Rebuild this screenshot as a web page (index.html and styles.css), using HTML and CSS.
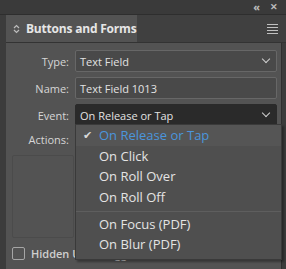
FILE: index.html
```html
<!DOCTYPE html>
<html lang="en">
<head>
    <meta charset="UTF-8">
    <title>Buttons and Forms</title>
    <link rel="stylesheet" href="styles.css">
</head>
<body>
    <div class="topbar">
        <span class="top-icon">&#x00AB;</span>
        <span class="top-icon close">&#x2715;</span>
    </div>
    <div class="tabrow">
        <div class="tab">
            <svg class="updown" width="7" height="10" viewBox="0 0 7 10">
                <path d="M1 4 L3.5 1.5 L6 4 M1 6 L3.5 8.5 L6 6" fill="none" stroke="#bdbdbd" stroke-width="1.2"/>
            </svg>
            Buttons and Forms
        </div>
        <div class="menu-btn">
            <span></span><span></span><span></span><span></span>
        </div>
    </div>

    <div class="panel">
        <div class="row">
            <label>Type:</label>
            <div class="field select">Text Field<span class="chev"></span></div>
        </div>
        <div class="row">
            <label>Name:</label>
            <div class="field">Text Field 1013</div>
        </div>
        <div class="row">
            <label>Event:</label>
            <div class="field select open">On Release or Tap<span class="chev"></span></div>
        </div>
        <div class="row actions">
            <label>Actions:</label>
        </div>
        <div class="action-list"></div>
        <div class="check-row">
            <span class="checkbox"></span>
            <span>Hidden Until Triggered</span>
        </div>

        <ul class="dropdown">
            <li class="selected"><span class="tick">&#x2714;</span>On Release or Tap</li>
            <li>On Click</li>
            <li>On Roll Over</li>
            <li>On Roll Off</li>
            <li class="sep"></li>
            <li>On Focus (PDF)</li>
            <li>On Blur (PDF)</li>
        </ul>
    </div>
</body>
</html>
```

FILE: styles.css
```css
body {
    margin: 0;
    width: 286px;
    height: 269px;
    overflow: hidden;
    background: #3c3c3c;
    font-family: "Open Sans", sans-serif;
    color: #dcdcdc;
}
.topbar {
    height: 14px;
    display: flex;
    justify-content: flex-end;
    align-items: center;
    gap: 10px;
    padding-right: 8px;
    background: #3a3a3a;
    border-bottom: 1px solid #2e2e2e;
}
.top-icon {
    font-size: 11px;
    line-height: 14px;
    color: #bcbcbc;
    font-weight: bold;
}
.top-icon.close {
    font-size: 9px;
}
.tabrow {
    display: flex;
    height: 27px;
    margin-left: 6px;
    background: #404040;
    border-bottom: 1px solid #333;
}
.tab {
    width: 131px;
    display: flex;
    align-items: center;
    gap: 6px;
    padding-left: 7px;
    box-sizing: border-box;
    background: #535353;
    font-weight: bold;
    font-size: 12px;
    letter-spacing: -0.2px;
    white-space: nowrap;
    color: #e6e6e6;
}
.menu-btn {
    margin-left: auto;
    margin-right: 8px;
    display: flex;
    flex-direction: column;
    justify-content: center;
    gap: 2px;
}
.menu-btn span {
    display: block;
    width: 11px;
    height: 1px;
    background: #c0c0c0;
}
.panel {
    position: relative;
    height: 227px;
    margin-left: 6px;
    margin-right: 4px;
    padding-top: 7px;
    box-sizing: border-box;
    background: #535353;
    border-right: 1px solid #2f2f2f;
}
.row {
    display: flex;
    align-items: center;
    margin-bottom: 5px;
}
.row label {
    width: 63px;
    text-align: right;
    padding-right: 6px;
    font-size: 11px;
    color: #d6d6d6;
}
.field {
    position: relative;
    width: 202px;
    height: 22px;
    box-sizing: border-box;
    padding-left: 4px;
    display: flex;
    align-items: center;
    font-size: 11px;
    color: #e2e2e2;
    background: #494949;
    border: 1px solid #676767;
    border-radius: 2px;
}
.field.open {
    background: #2a2a2a;
    border-color: #2a2a2a;
}
.chev {
    position: absolute;
    right: 7px;
    top: 5px;
    width: 5px;
    height: 5px;
    border-right: 1.5px solid #cfcfcf;
    border-bottom: 1.5px solid #cfcfcf;
    transform: rotate(45deg);
}
.row.actions {
    margin-top: 4px;
    height: 16px;
}
.action-list {
    margin: 8px 0 0 6px;
    width: 60px;
    height: 81px;
    border: 1px solid #4b4b4b;
    border-radius: 2px;
}
.check-row {
    display: flex;
    align-items: center;
    gap: 6px;
    margin: 8px 0 0 6px;
    font-size: 11px;
    font-weight: 600;
    color: #cfcfcf;
}
.checkbox {
    width: 11px;
    height: 11px;
    border: 1px solid #a6a6a6;
    border-radius: 2px;
}
.dropdown {
    position: absolute;
    left: 69px;
    top: 81px;
    width: 205px;
    margin: 0;
    padding: 0 0 4px;
    list-style: none;
    background: #4f4f4f;
    border: 1px solid #3a3a3a;
    box-shadow: 2px 2px 2px rgba(0, 0, 0, 0.35);
}
.dropdown li {
    height: 20.7px;
    line-height: 20.7px;
    padding-left: 23px;
    position: relative;
    font-size: 13px;
    color: #e4e4e4;
}
.dropdown li.selected {
    color: #4b95dc;
    background: #555555;
}
.dropdown .tick {
    position: absolute;
    left: 7px;
    color: #d8d8d8;
    font-size: 11px;
}
.dropdown li.sep {
    height: 0;
    margin: 3px 0 2px;
    border-top: 1px solid #5e5e5e;
}
```
